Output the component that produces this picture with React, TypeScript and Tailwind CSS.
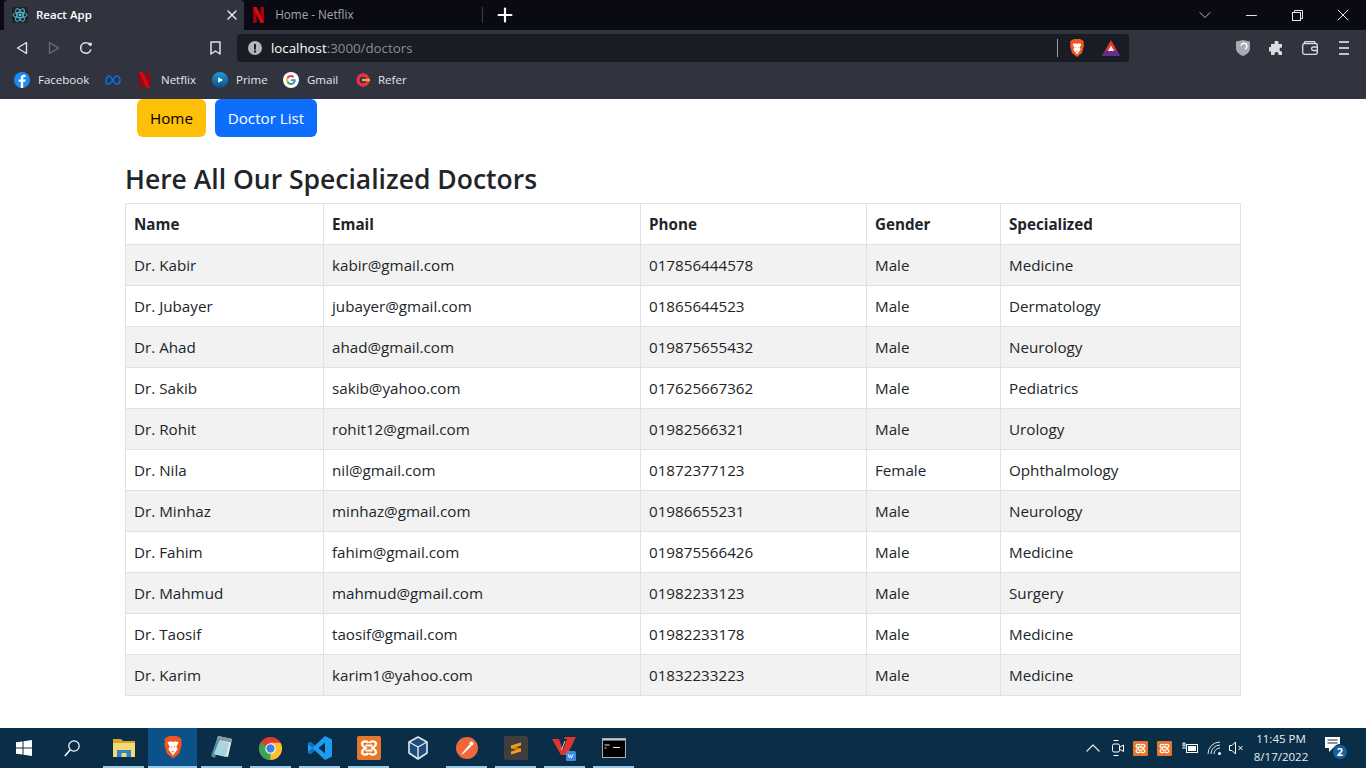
import { ReactNode } from "react";
import { ChevronDown, ChevronUp, Minus, Plus, X } from "lucide-react";

const DOCTORS = [
  ["Dr. Kabir", "kabir@gmail.com", "017856444578", "Male", "Medicine"],
  ["Dr. Jubayer", "jubayer@gmail.com", "01865644523", "Male", "Dermatology"],
  ["Dr. Ahad", "ahad@gmail.com", "019875655432", "Male", "Neurology"],
  ["Dr. Sakib", "sakib@yahoo.com", "017625667362", "Male", "Pediatrics"],
  ["Dr. Rohit", "rohit12@gmail.com", "01982566321", "Male", "Urology"],
  ["Dr. Nila", "nil@gmail.com", "01872377123", "Female", "Ophthalmology"],
  ["Dr. Minhaz", "minhaz@gmail.com", "01986655231", "Male", "Neurology"],
  ["Dr. Fahim", "fahim@gmail.com", "019875566426", "Male", "Medicine"],
  ["Dr. Mahmud", "mahmud@gmail.com", "01982233123", "Male", "Surgery"],
  ["Dr. Taosif", "taosif@gmail.com", "01982233178", "Male", "Medicine"],
  ["Dr. Karim", "karim1@yahoo.com", "01832233223", "Male", "Medicine"],
];

const HEADERS = ["Name", "Email", "Phone", "Gender", "Specialized"];

function NetflixIcon({ size = 16 }: { size?: number }) {
  return (
    <svg width={size * 0.7} height={size} viewBox="0 0 11 16">
      <path d="M0 0h3.6v16L0 15.6z" fill="#a5000b" />
      <path d="M7.4 0H11v15.6L7.4 16z" fill="#a5000b" />
      <path d="M0 0h3.6l7.4 15.6-3.6.4z" fill="#dc0612" />
    </svg>
  );
}

function ReactIcon() {
  return (
    <svg width="16" height="16" viewBox="0 0 16 16" fill="none" stroke="#58c4dc" strokeWidth="0.9">
      <rect width="16" height="16" rx="2" fill="#20232a" stroke="none" />
      <circle cx="8" cy="8" r="1.4" fill="#58c4dc" stroke="none" />
      <ellipse cx="8" cy="8" rx="7" ry="2.7" />
      <ellipse cx="8" cy="8" rx="7" ry="2.7" transform="rotate(60 8 8)" />
      <ellipse cx="8" cy="8" rx="7" ry="2.7" transform="rotate(120 8 8)" />
    </svg>
  );
}

function BraveIcon({ size = 16 }: { size?: number }) {
  return (
    <svg width={size} height={size * 1.16} viewBox="0 0 16 18.5">
      <path d="M3 1l2-1h6l2 1 2 1.5-.5 2 .5 2-2 7.5-5 4-5-4L1 6.5l.5-2L1 2.5z" fill="#f1561f" />
      <path d="M3.5 5l3-.8L8 5l1.5-.8 3 .8-1.8 3.5 1 2L8 15.5 4.3 10.5l1-2z" fill="#fff" />
      <path d="M6 8.2h1.3L6.7 9.3zM8.7 8.2H10L9.3 9.3zM7 12h2l-1 1.2z" fill="#f1561f" />
    </svg>
  );
}

function BatIcon() {
  return (
    <svg width="18" height="16" viewBox="0 0 18 16">
      <path d="M9 0l9 16H0z" fill="#e8392d" />
      <path d="M0 16l3.2-5.500h11.600L18 16z" fill="#662d91" />
      <path d="M9 5.500l3 5.500H6z" fill="#fff" />
    </svg>
  );
}

function GoogleIcon() {
  return (
    <svg width="16" height="16" viewBox="0 0 16 16">
      <circle cx="8" cy="8" r="8" fill="#fff" />
      <path d="M12.7 8.2c0-.4 0-.7-.1-1H8v1.900h2.700c-.1.6-.5 1.200-1 1.500l1.600 1.200c.9-.9 1.400-2.100 1.400-3.600z" fill="#4285f4" />
      <path d="M8 13c1.300 0 2.400-.4 3.300-1.200l-1.600-1.200c-.4.300-1 .5-1.700.5-1.300 0-2.400-.9-2.800-2L3.600 10.300C4.400 11.900 6.100 13 8 13z" fill="#34a853" />
      <path d="M5.200 9.100c-.2-.7-.2-1.500 0-2.200L3.600 5.700c-.7 1.400-.7 3.100 0 4.600z" fill="#fbbc05" />
      <path d="M8 5c.7 0 1.400.3 1.900.8l1.400-1.400C10.400 3.500 9.300 3 8 3 6.100 3 4.400 4.100 3.600 5.700l1.600 1.200C5.600 5.800 6.700 5 8 5z" fill="#ea4335" />
    </svg>
  );
}

function XamppIcon({ size }: { size: number }) {
  return (
    <svg width={size} height={size} viewBox="0 0 24 24">
      <rect width="24" height="24" rx="2" fill="#e8762a" />
      <path
        d="M11.5 7C10 4.500 5 4.800 5 8c0 2 2 3 3.500 4C7 13 5 14 5 16c0 3.200 5 3.500 6.500 1M12.500 7C14 4.500 19 4.800 19 8c0 2-2 3-3.500 4 1.500 1 3.500 2 3.500 4 0 3.200-5 3.500-6.500 1M8.500 9.500h7M8.500 14.500h7"
        fill="none"
        stroke="#fff"
        strokeWidth="2.2"
      />
    </svg>
  );
}

function BookmarkItem({ icon, label, className }: { icon: ReactNode; label?: string; className: string }) {
  return (
    <div className={`flex shrink-0 items-center gap-2 ${className}`}>
      <span className="flex h-4 w-4 items-center justify-center">{icon}</span>
      {label && <span className="text-[11.5px] text-[#e8e8ea]">{label}</span>}
    </div>
  );
}

function BrowserChrome() {
  return (
    <div className="h-[99px] shrink-0 bg-[#31333f]">
      {/* tab strip */}
      <div className="flex h-[30px] items-stretch bg-[#0a0a14] pl-[4px]">
        <div className="flex w-[240px] items-center rounded-t-[4px] bg-[#31333f] pl-[8px] pr-[4px]">
          <ReactIcon />
          <span className="ml-[8px] flex-1 text-[11.5px] font-semibold text-white">React App</span>
          <X size={16} strokeWidth={2.2} className="text-[#e8e8ea]" />
        </div>
        <div className="flex w-[238px] items-center pl-[9px]">
          <NetflixIcon />
          <span className="ml-[11px] text-[11.7px] text-[#a5a6ac]">Home - Netflix</span>
        </div>
        <div className="my-[7px] w-px bg-[#3c3d47]" />
        <div className="ml-[11px] flex items-center">
          <Plus size={22} strokeWidth={2.4} className="text-white" />
        </div>
        <div className="ml-auto flex items-center text-[#e8e8ea]">
          <div className="flex w-[46px] justify-center">
            <ChevronDown size={20} strokeWidth={1.1} className="text-[#c8c8cc]" />
          </div>
          <div className="flex w-[46px] justify-center">
            <Minus size={17} strokeWidth={1.4} />
          </div>
          <div className="flex w-[46px] justify-center">
            <svg width="11" height="11" viewBox="0 0 11 11" fill="none" stroke="currentColor">
              <rect x="0.5" y="2.5" width="8" height="8" fill="#0a0a14" />
              <path d="M2.5 2.5v-2h8v8h-2" />
            </svg>
          </div>
          <div className="flex w-[46px] justify-center">
            <X size={20} strokeWidth={1.2} />
          </div>
        </div>
      </div>

      {/* address row */}
      <div className="flex h-[36px] items-center">
        <div className="flex w-[237px] items-center text-[#e2e2e5]">
          <div className="flex w-[44px] justify-center">
            <svg width="12" height="14" viewBox="0 0 12 14" fill="none" stroke="currentColor" strokeWidth="1.4" strokeLinejoin="round">
              <path d="M10.5 1.5v11L1.5 7z" />
            </svg>
          </div>
          <div className="-ml-[3px] flex w-[26px] justify-center text-[#6f717b]">
            <svg width="12" height="14" viewBox="0 0 12 14" fill="none" stroke="currentColor" strokeWidth="1.2" strokeLinejoin="round">
              <path d="M1.5 1.5v11l9-5.500z" />
            </svg>
          </div>
          <div className="ml-[6px] flex w-[26px] justify-center">
            <svg width="14" height="14" viewBox="0 0 14 14" fill="none" stroke="currentColor" strokeWidth="1.6">
              <path d="M11.8 8.500A5.200 5.200 0 1 1 7 1.800c1.500 0 2.700.5 3.700 1.500" />
              <circle cx="11.3" cy="3.2" r="1.7" fill="currentColor" stroke="none" />
            </svg>
          </div>
          <div className="ml-[108px] flex w-[16px] justify-center">
            <svg width="11" height="14" viewBox="0 0 11 14" fill="none" stroke="currentColor" strokeWidth="1.5" strokeLinejoin="round">
              <path d="M1 1h9v12l-4.500-3L1 13z" />
            </svg>
          </div>
        </div>
        <div className="flex h-[28px] w-[892px] items-center rounded-[4px] bg-[#1a1c24] pl-[11px] pr-[9px]">
          <svg width="14" height="14" viewBox="0 0 14 14">
            <circle cx="7" cy="7" r="7" fill="#b4b5ba" />
            <rect x="6" y="3" width="2" height="5.5" fill="#1a1c24" />
            <rect x="6" y="9.5" width="2" height="2" fill="#1a1c24" />
          </svg>
          <span className="ml-[9px] pt-[1px] text-[13.3px] text-[#8b8c93]">
            <span className="text-white">localhost</span>:3000/doctors
          </span>
          <div className="ml-auto h-[18px] w-px bg-[#9a9ba1]" />
          <span className="ml-[11px]">
            <BraveIcon />
          </span>
          <span className="ml-[17px]">
            <BatIcon />
          </span>
        </div>
        <div className="flex flex-1 items-center pl-[107px] text-[#dcdce0]">
          <svg width="14" height="16" viewBox="0 0 14 16">
            <path d="M0 1.500L7 0l7 1.500v7C14 12 10 15 7 16c-3-1-7-4-7-7.500z" fill="#a9abb3" />
            <path d="M5 5.500a3 3 0 1 1 4 3.500" fill="none" stroke="#fff" strokeWidth="1.5" />
          </svg>
          <svg className="ml-[19px]" width="15" height="15" viewBox="0 0 15 15" fill="currentColor">
            <path d="M5.500 1.500a2 2 0 0 1 4 0V3H13v3.500h-.5a2 2 0 0 0 0 4h.5V14H9.500v-1a2 2 0 0 0-4 0v1H2v-3.500H1a2.200 2.200 0 0 1 0-4.400h1V3h3.500z" />
          </svg>
          <svg className="ml-[18px]" width="16" height="14" viewBox="0 0 16 14" fill="none" stroke="currentColor" strokeWidth="1.3">
            <rect x="0.7" y="2.5" width="14.6" height="10.8" rx="2" />
            <path d="M2 2.500l1-1.800h9.500l1 1.800M15.300 6h-4a1.500 1.500 0 0 0 0 3.500h4" />
          </svg>
          <div className="ml-[21px] flex w-[10px] flex-col gap-[4px]">
            <div className="h-[2px] bg-[#c4c5ca]" />
            <div className="h-[2px] bg-[#c4c5ca]" />
            <div className="h-[2px] bg-[#c4c5ca]" />
          </div>
        </div>
      </div>

      {/* bookmarks bar */}
      <div className="flex h-[28px] items-center pl-[14px]">
        <BookmarkItem
          className="w-[91px]"
          label="Facebook"
          icon={
            <svg width="16" height="16" viewBox="0 0 16 16">
              <circle cx="8" cy="8" r="8" fill="#1b8cf2" />
              <path d="M9.2 16V9.800h2l.4-2.300H9.200V6.100c0-.7.300-1.200 1.300-1.200h1.100v-2c-.6-.1-1.200-.2-1.800-.2-1.900 0-3 1.100-3 3.100v1.700H4.700v2.300h2.100V16z" fill="#fff" />
            </svg>
          }
        />
        <BookmarkItem
          className="w-[32px]"
          icon={
            <svg width="16" height="10" viewBox="0 0 16 10" fill="none" stroke="#0a70e8" strokeWidth="1.6">
              <path d="M1 7.500C1 4 2.500 1 4.200 1c2.300 0 4.500 8 7.300 8C13.500 9 15 8 15 5.500 15 3 13.500 1 11.700 1 9 1 6.800 9 4 9 2 9 1 8.500 1 7.500z" />
            </svg>
          }
        />
        <BookmarkItem className="w-[75px]" label="Netflix" icon={<NetflixIcon />} />
        <BookmarkItem
          className="w-[71px]"
          label="Prime"
          icon={
            <svg width="16" height="16" viewBox="0 0 16 16">
              <defs>
                <linearGradient id="prime" x1="0" y1="0" x2="0" y2="1">
                  <stop offset="0" stopColor="#1f9ad6" />
                  <stop offset="1" stopColor="#0c4f86" />
                </linearGradient>
              </defs>
              <circle cx="8" cy="8" r="8" fill="url(#prime)" />
              <path d="M6.2 5.200L11 8l-4.800 2.800z" fill="#fff" />
            </svg>
          }
        />
        <BookmarkItem className="w-[72px]" label="Gmail" icon={<GoogleIcon />} />
        <BookmarkItem
          className="w-[60px] gap-[7px]"
          label="Refer"
          icon={
            <svg width="14" height="14" viewBox="0 0 14 14" fill="none">
              <circle cx="7" cy="7" r="5" stroke="#ea2e55" strokeWidth="3.4" />
              <path d="M6 7h8" stroke="#f5a623" strokeWidth="2.4" />
            </svg>
          }
        />
      </div>
    </div>
  );
}

function DoctorTable() {
  return (
    <table className="w-full table-fixed border-collapse border border-[#dee2e6] text-[15.2px] text-[#212529]">
      <colgroup>
        <col className="w-[198px]" />
        <col className="w-[317px]" />
        <col className="w-[226px]" />
        <col className="w-[134px]" />
        <col />
      </colgroup>
      <thead>
        <tr>
          {HEADERS.map((h) => (
            <th key={h} className="h-[41px] border border-[#dee2e6] px-2 text-left font-bold">
              {h}
            </th>
          ))}
        </tr>
      </thead>
      <tbody>
        {DOCTORS.map((row, i) => (
          <tr key={row[0]} className={i % 2 === 0 ? "bg-[#f2f2f2]" : "bg-white"}>
            {row.map((cell) => (
              <td key={cell} className="h-[41px] border border-[#dee2e6] px-2">
                {cell}
              </td>
            ))}
          </tr>
        ))}
      </tbody>
    </table>
  );
}

function Taskbar() {
  const apps: { icon: ReactNode; open?: boolean; active?: boolean }[] = [
    {
      open: true,
      icon: (
        <svg width="22" height="20" viewBox="0 0 22 20">
          <path d="M0 1h8l2 2h12v15H0z" fill="#d9a52c" />
          <rect y="5" width="22" height="14" fill="#f8d775" />
          <rect x="4" y="12" width="14" height="7" fill="#2b86c9" />
          <rect x="8.5" y="15" width="5" height="4" fill="#f8d775" />
        </svg>
      ),
    },
    { open: true, active: true, icon: <BraveIcon size={20} /> },
    {
      open: true,
      icon: (
        <svg width="23" height="24" viewBox="0 0 23 24">
          <path d="M8 0l14 3-4 18L3 18z" fill="#e4ecf0" />
          <path d="M8 0l14 3-.8 3.500L7 4z" fill="#8a9aa3" />
          <path d="M1 20L7 3l3 .5L5 22z" fill="#4f93ab" />
          <path d="M4 18l5-13 10 2-3 14z" fill="#a9d4dd" />
        </svg>
      ),
    },
    {
      open: true,
      icon: (
        <svg width="23" height="23" viewBox="0 0 22 22">
          <circle cx="11" cy="11" r="11" fill="#e33b2e" />
          <path d="M11 11L1.500 5.500A11 11 0 0 0 11 22l4.800-8.300z" fill="#34a853" />
          <path d="M11 11l-.1 11A11 11 0 0 0 20.500 5.500H11z" fill="#fbc02d" />
          <circle cx="11" cy="11" r="5" fill="#fff" />
          <circle cx="11" cy="11" r="4" fill="#3f7fe8" />
        </svg>
      ),
    },
    {
      open: true,
      icon: (
        <svg width="24" height="24" viewBox="0 0 24 24">
          <path d="M17 0l7 3.400v17.200L17 24 7 14.500 2.500 18 0 16.700V7.300L2.500 6 7 9.500z" fill="#1f9cf0" />
          <path d="M17 6.500L10.500 12l6.500 5.500z" fill="#0a2e47" />
          <path d="M0 8l3-1.500L7 9.500l-2.500 2.500zM0 16l3 1.500 4-3-2.500-2.500z" fill="#0e6fb8" />
        </svg>
      ),
    },
    { open: true, icon: <XamppIcon size={24} /> },
    {
      icon: (
        <svg width="20" height="24" viewBox="0 0 20 24" fill="none">
          <path d="M10 1l9 5v11l-9 6-9-6V6z" fill="#1c4b7c" stroke="#e4e9ef" strokeWidth="1.6" strokeLinejoin="round" />
          <path d="M1 6l9 5 9-5M10 11v12" stroke="#e4e9ef" strokeWidth="1.4" />
        </svg>
      ),
    },
    {
      open: true,
      icon: (
        <svg width="22" height="22" viewBox="0 0 22 22">
          <circle cx="11" cy="11" r="11" fill="#f0683a" />
          <path d="M5.500 17L13.500 7.500l2 1.500L6.500 17.500z" fill="#fff" />
          <circle cx="15.5" cy="6.5" r="2" fill="#fff" />
        </svg>
      ),
    },
    {
      open: true,
      icon: (
        <svg width="24" height="24" viewBox="0 0 24 24">
          <rect width="24" height="24" rx="2" fill="#3e3e3e" />
          <path d="M7 9.500l10 3v3l-10-3z" fill="#c97a12" />
          <path d="M7 9.500L17 6.500v3l-10 3zM7 15.500l10-3v3l-10 3z" fill="#f59e1c" />
        </svg>
      ),
    },
    {
      open: true,
      icon: (
        <svg width="25" height="25" viewBox="0 0 25 25">
          <path d="M0 3h7l4 11 4-11h-3l1-2h11l-9 18h-6z" fill="#e0342c" />
          <path d="M13 5l-3.500 9" stroke="#fff" strokeWidth="0.8" />
          <rect x="14" y="15" width="10" height="10" rx="1.5" fill="#3d8be0" />
          <path d="M16 18l1.500 4 1-3 1 3 1.500-4" stroke="#fff" strokeWidth="0.8" fill="none" />
        </svg>
      ),
    },
    {
      open: true,
      icon: (
        <svg width="24" height="20" viewBox="0 0 24 20">
          <rect width="24" height="20" fill="#000" />
          <rect width="24" height="2.5" fill="#c9cdd0" />
          <rect x="0.5" y="0.5" width="23" height="19" fill="none" stroke="#a9adb0" />
          <path d="M2.500 7h5M2.500 10h2M11 9.500h7" stroke="#e8e8e8" strokeWidth="1.2" />
        </svg>
      ),
    },
  ];

  return (
    <div className="flex h-[40px] shrink-0 items-stretch bg-[#0a2e47] text-white">
      <div className="flex w-[47px] items-center justify-center">
        <svg width="16" height="16" viewBox="0 0 16 16" fill="#fff">
          <path d="M0 2.300L6.500 1.400v6.100H0zM7.500 1.300L16 0v7.500H7.500zM0 8.500h6.500v6.100L0 13.700zM7.500 8.500H16V16l-8.500-1.300z" />
        </svg>
      </div>
      <div className="mr-[2px] flex w-[50px] items-center justify-center">
        <svg width="16" height="17" viewBox="0 0 16 17" fill="none" stroke="#fff" strokeWidth="1.2">
          <circle cx="10" cy="6" r="5.2" />
          <path d="M6.300 9.800L.8 16" strokeWidth="1.5" />
        </svg>
      </div>
      {apps.map((app, i) => (
        <div
          key={i}
          className={`relative flex w-[49px] items-center justify-center ${app.active ? "bg-[#0a5289]" : ""}`}
        >
          {app.icon}
          {app.open && (
            <div className={`absolute bottom-0 h-[2px] bg-[#96cbe8] ${app.active ? "inset-x-0" : "inset-x-[4px]"}`} />
          )}
        </div>
      ))}
      <div className="ml-auto flex items-center pr-[18px]">
        <ChevronUp size={24} strokeWidth={1.2} className="text-[#e6e6e6]" />
        <svg className="ml-[7px]" width="12" height="18" viewBox="0 0 12 18" fill="none" stroke="#fff">
          <rect x="0.5" y="5" width="7" height="8" rx="1.5" />
          <path d="M8 8l3.500-2v6.500L8 10.500M1.500 1.500h5M1.500 16.500h5" />
        </svg>
        <span className="ml-[9px]">
          <XamppIcon size={15} />
        </span>
        <span className="ml-[9px]">
          <XamppIcon size={15} />
        </span>
        <svg className="ml-[10px]" width="16" height="14" viewBox="0 0 16 14">
          <rect x="4.5" y="3.5" width="11" height="8" stroke="#fff" fill="none" />
          <rect x="6" y="5" width="8" height="5" fill="#fff" />
          <path d="M0 7h4M1 2v3h2V2z" stroke="#fff" fill="none" />
        </svg>
        <svg className="ml-[9px]" width="15" height="14" viewBox="0 0 15 14" fill="none" stroke="#dfe6ea">
          <path d="M1 13A12 12 0 0 1 13 1M4 13a9 9 0 0 1 9-9M7 13a6 6 0 0 1 6-6" />
          <circle cx="12.5" cy="12.5" r="1.5" fill="#fff" stroke="none" />
        </svg>
        <svg className="ml-[7px]" width="14" height="14" viewBox="0 0 14 14" fill="none" stroke="#fff">
          <path d="M.5 4.500h2.500L6.500 1v12L3 9.500H.5zM9.500 5l4 4M13.500 5l-4 4" />
        </svg>
        <div className="ml-[8px] flex w-[60px] flex-col items-center text-[11.5px] leading-[18px] text-[#e9edf0]">
          <span>11:45 PM</span>
          <span>8/17/2022</span>
        </div>
        <div className="relative ml-[14px] h-[26px] w-[23px]">
          <svg className="absolute left-0 top-[2px]" width="15" height="15" viewBox="0 0 15 15" fill="#fff">
            <path d="M0 0h15v11H8l-4 4v-4H0z" />
            <path d="M2.500 3h10M2.500 6h10" stroke="#0a2e47" />
          </svg>
          <span className="absolute left-[7px] top-[9px] flex h-[16px] w-[16px] items-center justify-center rounded-full border border-[#0a2e47] bg-[#17609c] text-[11px] font-bold">
            2
          </span>
        </div>
      </div>
    </div>
  );
}

export default function App() {
  return (
    <div className="flex h-screen flex-col overflow-hidden bg-white font-['Open_Sans','Noto_Sans',sans-serif]">
      <BrowserChrome />
      <main className="flex-1 px-[125px]">
        <div className="flex gap-[9px] pl-[12px]">
          <button className="h-[38px] w-[69px] rounded-[6px] bg-[#ffc107] text-[15.2px] text-black">Home</button>
          <button className="h-[38px] w-[102px] rounded-[6px] bg-[#0d6efd] text-[15.2px] text-white">Doctor List</button>
        </div>
        <h2 className="mb-[5px] mt-[23px] text-[26.5px] font-semibold leading-[38px] text-[#212529]">
          Here All Our Specialized Doctors
        </h2>
        <DoctorTable />
      </main>
      <Taskbar />
    </div>
  );
}
